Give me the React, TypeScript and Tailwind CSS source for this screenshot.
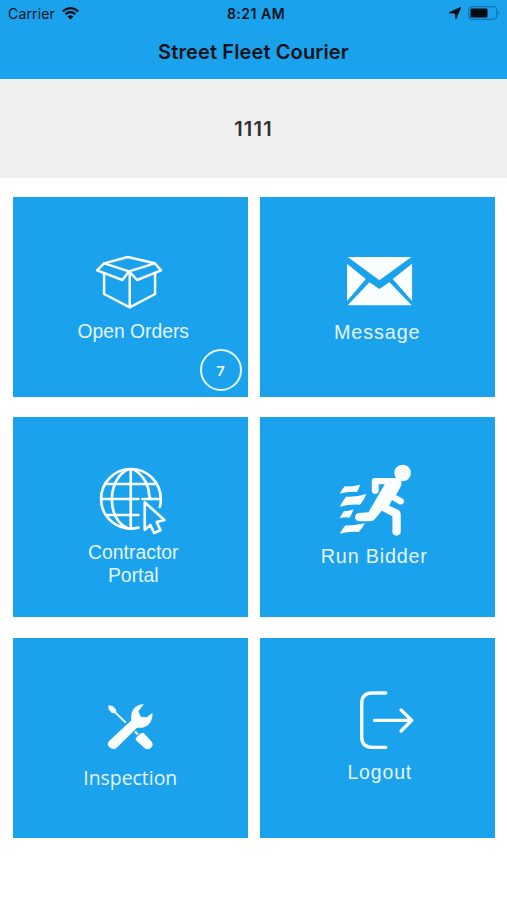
import type { ReactNode } from "react";

const line = { fill: "none", stroke: "currentColor", strokeLinecap: "round", strokeLinejoin: "round" } as const;

function BoxIcon() {
  return (
    <svg className="h-[78px] w-[120px] shrink-0" viewBox="0.75 6 360 234" {...line} strokeWidth="7.5">
      <path d="M103 70 174 51 255 70 178 94Z" />
      <path d="M103 70 82 91 158 120 178 94 202 120 274 91 255 70" />
      <path d="M103 102V162L180 202 256 162V102M180 96V202" />
    </svg>
  );
}

function MailIcon() {
  return (
    <svg className="h-[78px] w-[120px] shrink-0" viewBox="-8.25 6 360 234" fill="currentColor">
      <path d="M84 51H275L179 121ZM82 71 138 117 82 183ZM277 71V183L219 117ZM84 196 149 127 179 147 209 127 276 196Z" />
    </svg>
  );
}

function GlobeIcon() {
  return (
    <svg className="h-[78px] w-[120px] shrink-0" viewBox="-29.25 12 360 234" {...line} strokeWidth="8">
      <path d="M176 218C118 232 64 189 64 132A89.5 90 0 0 1 153.500 42A89.5 90 0 0 1 243 132Q244 145 240 156" />
      <path d="M153 43V221M66 132H176M188 132H242M80 87H227M80 180H176" />
      <path d="M145 43C82 72 78 192 145 220M161 43C192 60 207 92 208 118Q208 130 216 132" />
      <path d="M195 142V224L212 210 223 234 242 226 231 201 254 195Z" />
    </svg>
  );
}

function RunIcon() {
  return (
    <svg className="h-[78px] w-[120px] shrink-0" viewBox="21.75 12 360 234" fill="currentColor">
      <circle cx="278.5" cy="54" r="25" />
      <path d="M195 69H255C273 69 280 83 272 97L259 120 279 131Q286 137 281 145 276 151 267 147L247 135 238 152 265 164Q273 168 273 178V232Q271 242 260 242 249 241 248 232V184L216 167 195 193Q189 199 180 199H147Q136 196 136 186 137 176 147 174L176 172 225 88H207V109Q205 117 196 117 187 116 186 108V78Q186 69 195 69Z" />
      <path d="M90 116Q97 102 105 94 127 96 151 89 148 102 141 111 114 109 90 116ZM90 155Q98 138 109 125 139 127 170 117 163 135 151 149 119 147 90 155ZM90 190Q96 176 103 168 116 170 131 163 127 177 119 188 104 185 90 190ZM90 236Q99 218 108 211 136 212 165 205 158 221 147 231 117 229 90 236Z" />
    </svg>
  );
}

function ToolsIcon() {
  return (
    <svg className="h-[78px] w-[120px] shrink-0" viewBox="0.75 9 360 234" fill="currentColor">
      <path d="M118 153 185 91C181 64 195 43 222 43L206 64 213 80 231 82 248 68C250 98 231 117 202 113L141 173Q131 181 119 172 109 163 118 153Z" />
      <path d="M116 46 129 48 140 60 139 66 170 96 166 100 135 70 126 69 116 56ZM193 127 198 122 207 131 202 136Z" />
      <path d="M198 144 214 129 222 129 246 155Q253 165 243 174 233 182 224 174L198 150Z" />
    </svg>
  );
}

function LogoutIcon() {
  return (
    <svg className="h-[78px] w-[120px] shrink-0" viewBox="-38.25 9 360 234" {...line} strokeWidth="10">
      <path d="M168 39H127Q96 39 96 70V171Q96 202 127 202H168M134 121H246M214 90 246 121 214 153" />
    </svg>
  );
}

function Tile({ pad, label, text, children }: { pad: string; label: string; text: string; children: ReactNode }) {
  return (
    <button className={`relative flex flex-col items-center bg-[#1aa2ed] text-[#fafeff] ${pad}`}>
      {children}
      <span className={`whitespace-pre-line text-center text-[#e5f5ff] ${text}`}>{label}</span>
    </button>
  );
}

export default function App() {
  return (
    <main className="h-[900px] w-[507px] overflow-hidden bg-white font-['Liberation_Sans',sans-serif]">
      <header className="h-[79px] bg-[#1aa2ed] font-['Inter',sans-serif] text-[#071218]">
        <div className="grid h-[26px] grid-cols-3 items-center pl-[8px] pr-[7px] text-[14px]">
          <div className="flex items-center gap-[7px]">
            <span className="tracking-[0.15px]">Carrier</span>
            <svg className="h-[13px] w-[17px]" viewBox="0 0 17 13" fill="none" stroke="currentColor" strokeWidth="2.2">
              <path d="M.8 4.5C5-.1 12-.1 16.2 4.5M3.5 7.3C6.3 4.5 10.7 4.5 13.5 7.3" />
              <path d="m5.5 9.4 3 3 3-3Q8.5 7 5.5 9.4Z" fill="currentColor" stroke="none" />
            </svg>
          </div>
          <span className="pl-[4px] text-center text-[14px] font-semibold tracking-[0.5px]">8:21 AM</span>
          <div className="flex items-center justify-end gap-[7px]">
            <svg className="size-[12px]" viewBox="0 0 12 12" fill="currentColor">
              <path d="M11.8.2 7 12 6.2 6.2 0 5.8Z" stroke="currentColor" strokeWidth=".8" strokeLinejoin="round" />
            </svg>
            <svg className="h-[14px] w-[32px]" viewBox="0 0 32 14">
              <rect x=".7" y=".7" width="28" height="12.6" rx="3.5" fill="none" stroke="#1275ac" strokeWidth="1.2" />
              <rect x="2.5" y="2.5" width="17" height="9" rx="1.2" fill="#000b12" />
              <path d="M30.2 5Q32.8 7 30.2 9Z" fill="#1275ac" />
            </svg>
          </div>
        </div>
        <h1 className="pt-[11px] text-center text-[20px] font-semibold leading-[31px] tracking-[0.12px]">
          Street Fleet Courier
        </h1>
      </header>
      <section className="flex h-[98.5px] items-center justify-center bg-[#efefef] pt-px font-['Inter',sans-serif] text-[20px] font-semibold tracking-[1.2px] text-[#303030]">
        1111
      </section>
      <div className="grid grid-cols-[234.5px_234.5px] grid-rows-[200px_200px_200px] gap-x-[12.5px] gap-y-[20.3px] pl-[13px] pt-[19.5px]">
        <Tile pad="pt-[45px]" label="Open Orders" text="text-[19.3px] leading-6 pl-[6px]">
          <BoxIcon />
          <span className="absolute bottom-[6px] right-[6px] flex size-[42px] items-center justify-center rounded-full border-[2.4px] border-[#e8f7ff] font-['Open_Sans',sans-serif] text-[15px] font-semibold">
            7
          </span>
        </Tile>
        <Tile pad="pt-[45px]" label="Message" text="text-[19.8px] leading-6 tracking-[0.9px]">
          <MailIcon />
        </Tile>
        <Tile pad="pt-[41.5px]" label={"Contractor\nPortal"} text="mt-[4px] text-[19.4px] leading-[23.5px] pl-[6px]">
          <GlobeIcon />
        </Tile>
        <Tile pad="pt-[41.5px]" label="Run Bidder" text="mt-[7px] text-[19.8px] leading-6 tracking-[0.8px] -ml-[6px]">
          <RunIcon />
        </Tile>
        <Tile pad="pt-[55px]" label="Inspection" text="mt-[-5px] font-['Open_Sans',sans-serif] text-[19.4px] leading-6">
          <ToolsIcon />
        </Tile>
        <Tile pad="pt-[45px]" label="Logout" text="mt-[-1px] text-[19.4px] leading-6 tracking-[0.9px] pl-[5px]">
          <LogoutIcon />
        </Tile>
      </div>
    </main>
  );
}
